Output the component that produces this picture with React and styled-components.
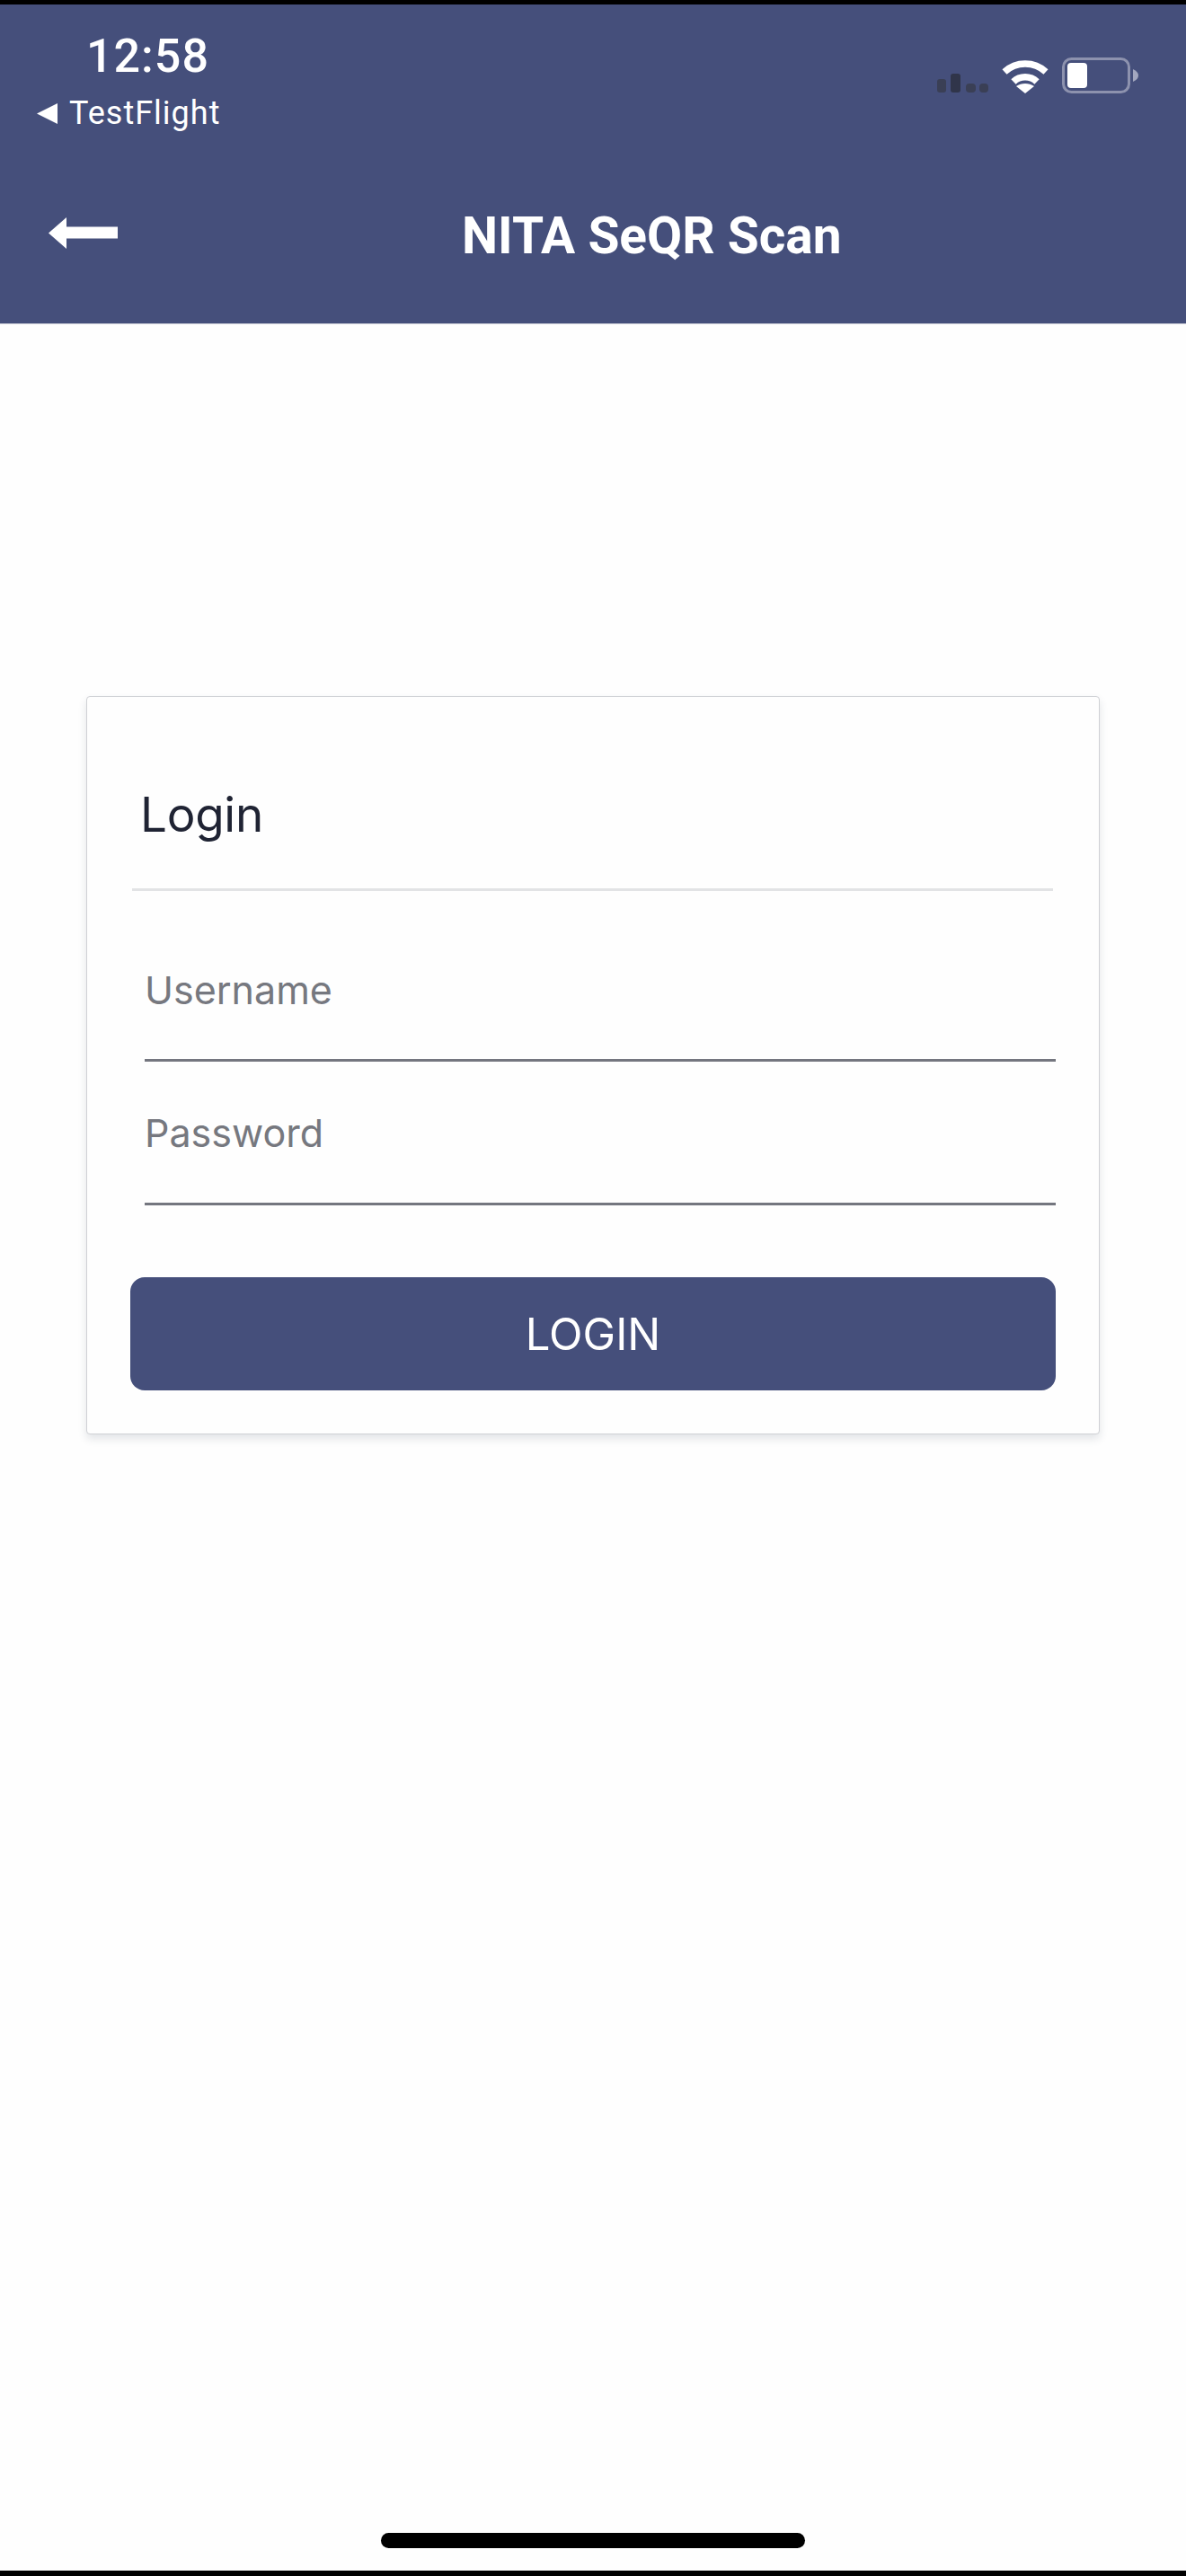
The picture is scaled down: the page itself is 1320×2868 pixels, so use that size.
import React from "react";
import styled, { createGlobalStyle } from "styled-components";

const Global = createGlobalStyle`
  html, body { margin: 0; padding: 0; background: #fff; }
  * { box-sizing: border-box; }
  #root { width: 1320px; height: 2868px; }
`;

const Page = styled.div`
  width: 1320px;
  height: 2868px;
  display: flex;
  flex-direction: column;
  background: #fefefe;
  font-family: Roboto, "Liberation Sans", sans-serif;
`;

const Header = styled.header`
  height: 361px;
  flex: none;
  border-top: 5px solid #000;
  border-bottom: 1px solid #c9cbd6;
  background: #454f7b;
  color: #fff;
  display: flex;
  flex-direction: column;
`;

const StatusBar = styled.div`
  height: 141px;
  display: flex;
  justify-content: space-between;
  align-items: flex-start;
  padding: 28px 53px 0 41px;
`;

const StatusLeft = styled.div`
  display: flex;
  flex-direction: column;
  align-items: flex-start;
`;

const Time = styled.div`
  margin-left: 55px;
  font-size: 52px;
  line-height: 60px;
  font-weight: 500;
  letter-spacing: 1px;
`;

const BackApp = styled.div`
  display: flex;
  align-items: center;
  gap: 13px;
  margin-top: 13px;
  font-size: 36px;
  line-height: 40px;
  letter-spacing: 1px;
`;

const StatusRight = styled.div`
  display: flex;
  align-items: flex-end;
  margin-top: 31px;
  gap: 15px;
`;

const Toolbar = styled.div`
  flex: 1;
  display: flex;
  align-items: flex-start;
  padding: 96px 0 0 54px;
`;

const Title = styled.h1`
  margin: -12px 0 0 383px;
  font-size: 56.8px;
  line-height: 66px;
  font-weight: 700;
  color: #fff;
  white-space: nowrap;
`;

const Main = styled.main`
  flex: 1;
  padding: 414px 96px 0;
`;

const Card = styled.section`
  height: 822px;
  background: #fefefe;
  border: 1px solid #cfd1d5;
  border-radius: 4px;
  padding: 0 48px;
  box-shadow: 0 5px 10px rgba(60, 70, 90, 0.14);
  display: flex;
  flex-direction: column;
`;

const CardTitle = styled.h2`
  margin: 0 3px 0 2px;
  height: 216px;
  padding: 95px 0 0 9px;
  font-family: Inter, "Liberation Sans", sans-serif;
  font-size: 53px;
  line-height: 72px;
  font-weight: 400;
  letter-spacing: -0.3px;
  color: #1f2333;
  border-bottom: 3px solid #e2e3e5;
`;

const Field = styled.div`
  margin-left: 16px;
  height: 160px;
  display: flex;
  align-items: flex-end;
  padding-bottom: 50px;
  border-bottom: 3px solid #74767f;
  font-family: Inter, "Liberation Sans", sans-serif;
  font-size: 43px;
  line-height: 56px;
  color: #76787f;
`;

const FirstField = styled(Field)`
  height: 190px;
  padding-bottom: 49px;
`;

const LoginButton = styled.button`
  margin-top: 80px;
  height: 126px;
  border: 0;
  border-radius: 16px;
  background: #454f7b;
  color: #fff;
  font-family: Inter, "Liberation Sans", sans-serif;
  font-size: 49px;
  font-weight: 400;
`;

const Footer = styled.footer`
  flex: none;
  height: 51px;
  padding-top: 9px;
  display: flex;
  flex-direction: column;
  align-items: center;
  background: #fefefe;
`;

const HomeIndicator = styled.div`
  width: 472px;
  height: 17px;
  border-radius: 9px;
  background: #000;
`;

const BottomEdge = styled.div`
  flex: none;
  height: 6px;
  background: #000;
`;

const SignalIcon = () => (
  <svg width="57" height="22" viewBox="0 0 57 22" fill="#30354a">
    <rect x="0" y="6" width="10" height="15" rx="3" fill="#3a3f55" />
    <rect x="15" y="0" width="11" height="21" rx="3" />
    <rect x="32" y="11" width="11" height="10" rx="4" fill="#3a3f55" />
    <rect x="47" y="11" width="10" height="10" rx="4" fill="#3a3f55" />
  </svg>
);

const WifiIcon = () => (
  <svg width="52" height="38" viewBox="0 0 52 38" fill="none" stroke="#fff" strokeWidth="7.5">
    <path d="M3 14 C16 2 36 2 49 14" />
    <path d="M13 25 C20 18 32 18 39 25" />
    <path d="M26 38 L16 30 C22 26 30 26 36 30 Z" fill="#fff" stroke="none" />
  </svg>
);

const BatteryIcon = () => (
  <svg width="85" height="40" viewBox="0 0 85 40">
    <rect x="1.5" y="1.5" width="73" height="37" rx="9" fill="none" stroke="#8d92ae" strokeWidth="3" />
    <rect x="6" y="6" width="22" height="28" rx="4" fill="#fff" />
    <path d="M79 13 C83 15 85 17 85 20 C85 23 83 25 79 27 Z" fill="#a3a7bf" />
  </svg>
);

const BackTriangle = () => (
  <svg width="23" height="23" viewBox="0 0 23 23" fill="#fff">
    <path d="M0 11.5 L23 0 V23 Z" />
  </svg>
);

const BackArrow = () => (
  <svg width="77" height="35" viewBox="0 0 77 35" fill="#fff">
    <path d="M0 17.5 L20 0 V10.5 H77 V23.5 H20 V35 Z" />
  </svg>
);

export default function App() {
  return (
    <Page>
      <Global />
      <Header>
        <StatusBar>
          <StatusLeft>
            <Time>12:58</Time>
            <BackApp>
              <BackTriangle />
              <span>TestFlight</span>
            </BackApp>
          </StatusLeft>
          <StatusRight>
            <SignalIcon />
            <WifiIcon />
            <BatteryIcon />
          </StatusRight>
        </StatusBar>
        <Toolbar>
          <BackArrow />
          <Title>NITA SeQR Scan</Title>
        </Toolbar>
      </Header>
      <Main>
        <Card>
          <CardTitle>Login</CardTitle>
          <FirstField>Username</FirstField>
          <Field>Password</Field>
          <LoginButton>LOGIN</LoginButton>
        </Card>
      </Main>
      <Footer>
        <HomeIndicator />
      </Footer>
      <BottomEdge />
    </Page>
  );
}
